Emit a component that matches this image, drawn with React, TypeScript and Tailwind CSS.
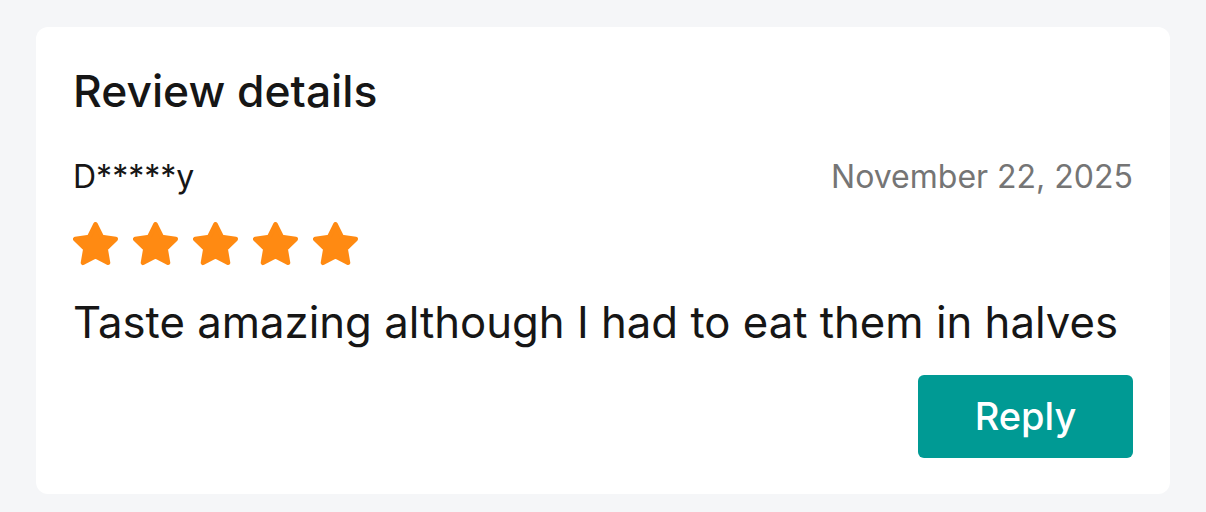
function Stars({ count }: { count: number }) {
  return (
    <div className="flex items-center gap-[15px]">
      {Array.from({ length: count }).map((_, i) => (
        <svg key={i} viewBox="2.2 2 19.6 20" className="h-[46px] w-[45px] text-[#ff8a12]">
          <path
            fill="currentColor"
            stroke="currentColor"
            strokeWidth="2"
            strokeLinejoin="round"
            d="M12 3l2.75 5.5 6.05.9-4.4 4.3 1.05 6.05L12 16.9l-5.45 2.85 1.05-6.05-4.4-4.3 6.05-.9z"
          />
        </svg>
      ))}
    </div>
  );
}

export default function App() {
  return (
    <div className="min-h-[512px] bg-[#f5f6f8] px-[36px] pt-[27px] font-['Inter',sans-serif]">
      <div className="flex flex-col rounded-[12px] bg-white px-[37px] pb-[36px] pt-[38px]">
        <h2 className="text-[44.4px] font-medium leading-[52px] text-[#161616]">Review details</h2>
        <div className="mt-[40px] flex items-center justify-between">
          <span className="text-[32px] leading-[40px] text-[#161616]">D*****y</span>
          <span className="text-[32px] leading-[40px] text-[#757575]">November 22, 2025</span>
        </div>
        <div className="mt-[25px]">
          <Stars count={5} />
        </div>
        <p className="mt-[29px] text-[43.7px] leading-[52px] text-[#161616]">
          Taste amazing although I had to eat them in halves
        </p>
        <div className="mt-[26px] flex justify-end">
          <button className="flex h-[83px] w-[215px] items-center justify-center rounded-[6px] bg-[#009a94] text-[38px] font-medium text-white">
            Reply
          </button>
        </div>
      </div>
    </div>
  );
}
